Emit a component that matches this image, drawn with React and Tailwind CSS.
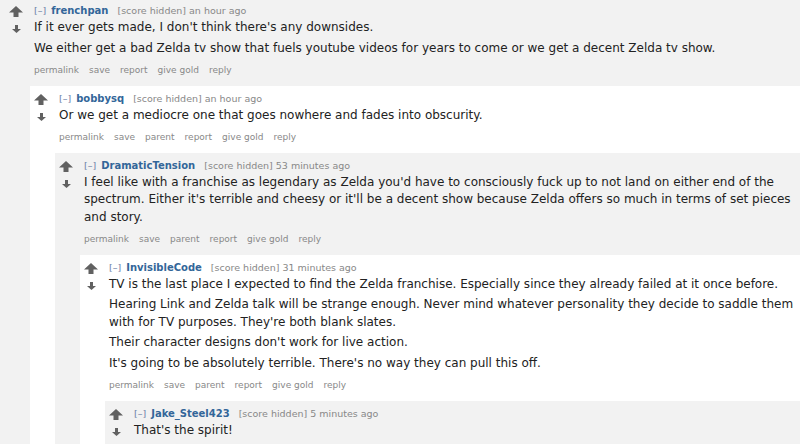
const thread = {
  author: "frenchpan",
  time: "an hour ago",
  paragraphs: [
    ["If it ever gets made, I don't think there's any downsides."],
    [
      "We either get a bad Zelda tv show that fuels youtube videos for years to come or we get a decent Zelda tv show.",
    ],
  ],
  buttons: ["permalink", "save", "report", "give gold", "reply"],
  child: {
    author: "bobbysq",
    time: "an hour ago",
    paragraphs: [["Or we get a mediocre one that goes nowhere and fades into obscurity."]],
    buttons: ["permalink", "save", "parent", "report", "give gold", "reply"],
    child: {
      author: "DramaticTension",
      time: "53 minutes ago",
      paragraphs: [
        [
          "I feel like with a franchise as legendary as Zelda you'd have to consciously fuck up to not land on either end of the",
          "spectrum. Either it's terrible and cheesy or it'll be a decent show because Zelda offers so much in terms of set pieces",
          "and story.",
        ],
      ],
      buttons: ["permalink", "save", "parent", "report", "give gold", "reply"],
      child: {
        author: "InvisibleCode",
        time: "31 minutes ago",
        paragraphs: [
          [
            "TV is the last place I expected to find the Zelda franchise. Especially since they already failed at it once before.",
          ],
          [
            "Hearing Link and Zelda talk will be strange enough. Never mind whatever personality they decide to saddle them",
            "with for TV purposes. They're both blank slates.",
          ],
          ["Their character designs don't work for live action."],
          ["It's going to be absolutely terrible. There's no way they can pull this off."],
        ],
        buttons: ["permalink", "save", "parent", "report", "give gold", "reply"],
        child: {
          author: "Jake_Steel423",
          time: "5 minutes ago",
          paragraphs: [["That's the spirit!"]],
          buttons: [],
        },
      },
    },
  },
};

const UpArrow = () => (
  <svg width="14" height="11" viewBox="0 0 14 11" className="block">
    <path d="M7 0 L14 6.5 L9.5 6.5 L9.5 11 L4.5 11 L4.5 6.5 L0 6.5 Z" fill="#616161" />
  </svg>
);

const DownArrow = () => (
  <svg width="9" height="8" viewBox="0 0 9 8" className="block">
    <path d="M4.5 8 L9 4 L6 4 L6 0 L3 0 L3 4 L0 4 Z" fill="#616161" />
  </svg>
);

function Comment({ comment, depth = 0 }) {
  const bg = depth % 2 === 0 ? "bg-[#f2f2f2]" : "bg-white";

  return (
    <div
      className={`${bg} pb-[10px] ${
        depth === 0 ? "pt-[3px] pl-[9px]" : "pt-[5px] pl-[4px]"
      }`}
    >
      <div className="flex">
        {/* vote arrows */}
        <div className="w-[25px] shrink-0">
          <div className="w-[14px] flex flex-col items-center gap-[8px] mt-[3px]">
            <UpArrow />
            <DownArrow />
          </div>
        </div>

        <div className="min-w-0 flex-1 flex flex-col">
          <div className="h-[12px] leading-[12px] whitespace-nowrap">
            <span className="text-[#6d82a6] text-[9.5px]">[–]</span>
            <span className="ml-[5px] font-bold text-[#336699] text-[10px]">
              {comment.author}
            </span>
            <span className="ml-[9px] text-[#888] text-[9.5px]">
              [score hidden] {comment.time}
            </span>
          </div>

          <div className="mt-[4px] flex flex-col gap-[3px] text-[12px] leading-[17.5px] text-[#222]">
            {comment.paragraphs.map((lines, i) => (
              <p key={i}>
                {lines.map((line, j) => (
                  <span key={j} className="block whitespace-nowrap">
                    {line}
                  </span>
                ))}
              </p>
            ))}
          </div>

          {comment.buttons.length > 0 && (
            <div className="mt-[6.5px] flex gap-[10px] h-[12px] leading-[12px] text-[9px] text-[#888] whitespace-nowrap">
              {comment.buttons.map((b) => (
                <span key={b}>{b}</span>
              ))}
            </div>
          )}
        </div>
      </div>

      {comment.child && (
        <div className="mt-[10px] ml-[21px]">
          <Comment comment={comment.child} depth={depth + 1} />
        </div>
      )}
    </div>
  );
}

export default function App() {
  return (
    <div className="w-[800px] h-[444px] overflow-hidden bg-[#f2f2f2] font-['DejaVu_Sans',Verdana,sans-serif]">
      <Comment comment={thread} />
    </div>
  );
}
